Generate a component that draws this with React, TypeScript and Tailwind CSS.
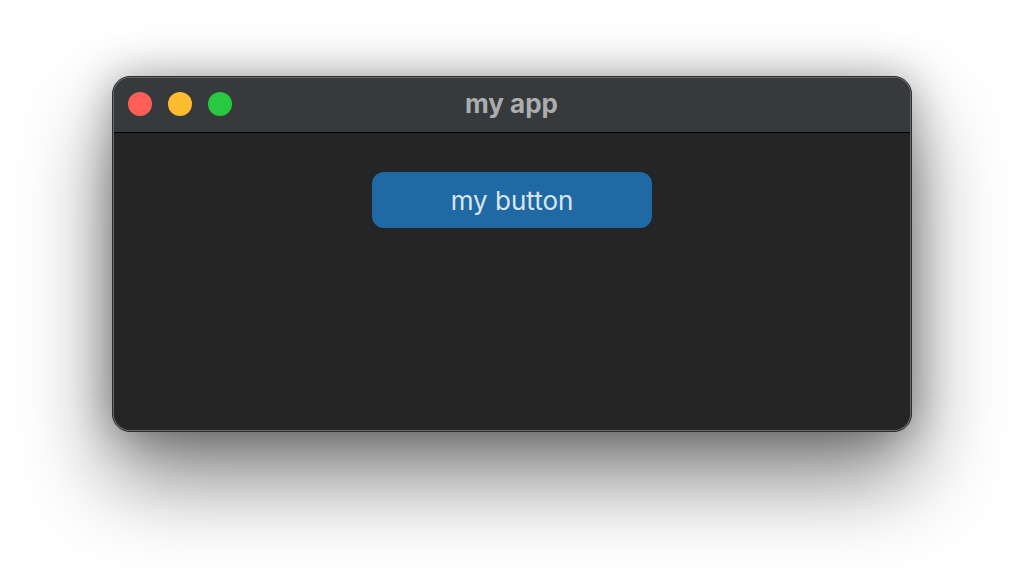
// macOS style app window on a white page
export default function App() {
  return (
    <div className="flex h-[580px] w-[1024px] justify-center overflow-hidden bg-white pt-[76px] font-['Inter',sans-serif]">
      <div className="h-[356px] w-[800px] rounded-[18px] border border-[#2e2e2e] bg-[#686868] p-px shadow-[0_44px_88px_rgba(0,0,0,0.52),0_0_40px_rgba(0,0,0,0.3)]">
        <div className="flex h-full flex-col overflow-hidden rounded-[16px] bg-[#252525]">
          <div className="relative flex h-[55px] flex-none items-center justify-center border-b border-black bg-[#363a3d] pb-[3px]">
            <div className="absolute left-[14px] top-[14px] flex gap-4">
              <span className="h-6 w-6 rounded-full bg-[#ff5f57]" />
              <span className="h-6 w-6 rounded-full bg-[#febc2e]" />
              <span className="h-6 w-6 rounded-full bg-[#28c840]" />
            </div>
            <span className="-ml-px text-[26px] font-bold leading-none text-[#abadae]">my app</span>
          </div>
          <div className="flex flex-1 justify-center pt-[39px]">
            <button
              type="button"
              className="h-14 w-[280px] rounded-xl bg-[#1f69a4] text-[26px] font-normal text-[#d9e6f2]"
            >
              my button
            </button>
          </div>
        </div>
      </div>
    </div>
  );
}
